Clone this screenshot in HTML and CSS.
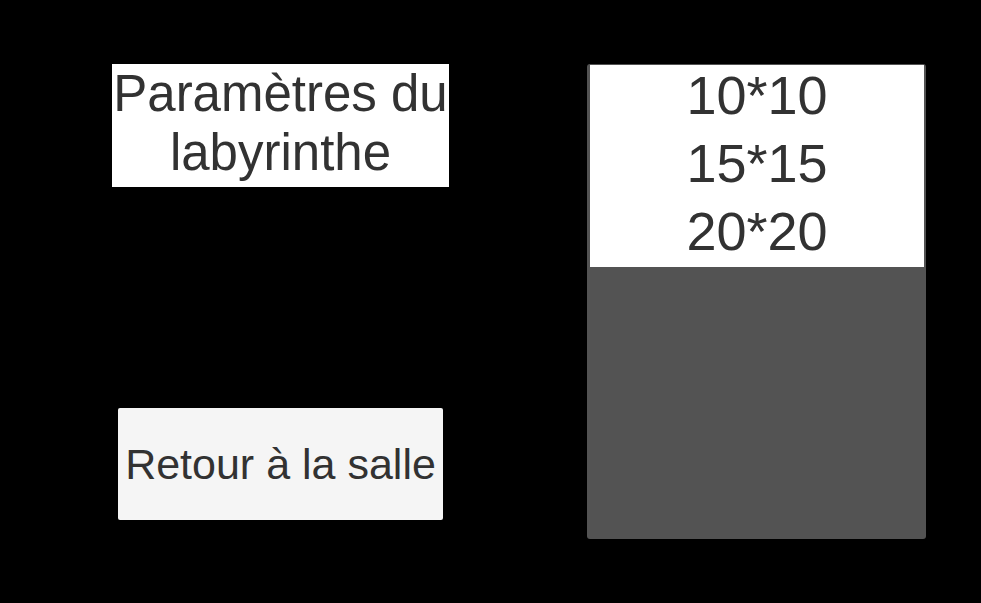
FILE: index.html
```html
<!DOCTYPE html>
<html lang="fr">
<head>
    <meta charset="UTF-8">
    <meta name="viewport" content="width=device-width, initial-scale=1.0">
    <title>Paramètres du labyrinthe</title>
    <link rel="stylesheet" href="styles.css">
</head>
<body>
    <div class="screen">
        <div class="left-col">
            <h1 class="title">Paramètres du labyrinthe</h1>
            <button class="back-btn" type="button">Retour à la salle</button>
        </div>

        <div class="size-panel">
            <ul class="size-list">
                <li class="size-item">10*10</li>
                <li class="size-item">15*15</li>
                <li class="size-item">20*20</li>
            </ul>
        </div>
    </div>
</body>
</html>
```

FILE: styles.css
```css
* {
    margin: 0;
    padding: 0;
    box-sizing: border-box;
    font-family: 'Liberation Sans', Arial, sans-serif;
}

html, body {
    width: 100%;
    height: 100%;
    background-color: #000;
    overflow: hidden;
}

.screen {
    display: flex;
    padding: 64px 0 0 112px;
    gap: 138px;
    color: #323232;
}

.left-col {
    width: 337px;
    display: flex;
    flex-direction: column;
    align-items: flex-start;
}

/* titre */
.title {
    width: 337px;
    height: 123px;
    background-color: #fff;
    font-size: 51px;
    font-weight: 400;
    line-height: 59px;
    text-align: center;
}

.back-btn {
    margin: 221px 0 0 6px;
    width: 325px;
    height: 112px;
    background-color: #f5f5f5;
    border: none;
    border-radius: 2px;
    color: #323232;
    font-size: 43px;
}

/* liste des tailles */
.size-panel {
    width: 339px;
    height: 475px;
    background-color: #535353;
    border-radius: 3px;
    padding: 1px 2px 0 3px;
}

.size-list {
    list-style: none;
    background-color: #fff;
    height: 202px;
    display: flex;
    flex-direction: column;
    gap: 8px;
}

.size-item {
    text-align: center;
    font-size: 54px;
    line-height: 60px;
}
```
